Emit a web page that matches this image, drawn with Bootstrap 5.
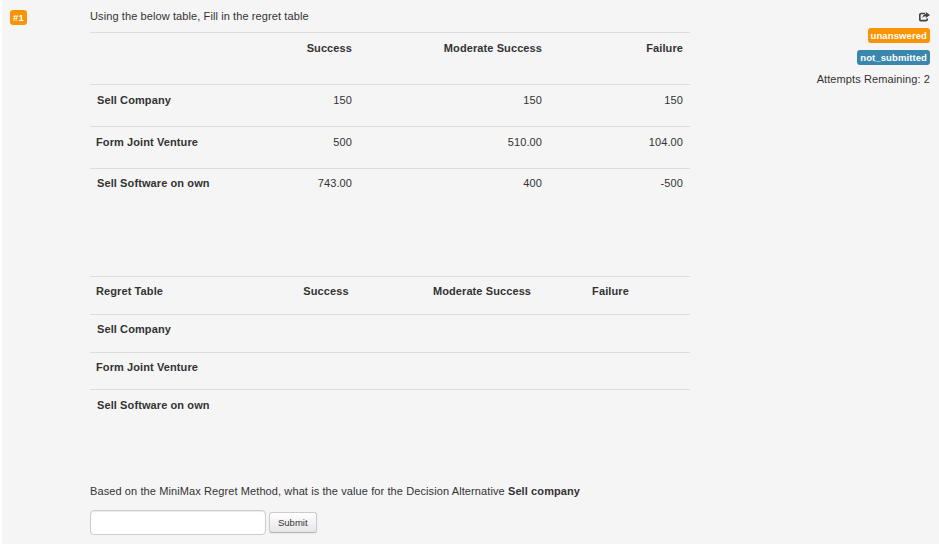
<!DOCTYPE html>
<html lang="en">
<head>
<meta charset="utf-8">
<title>Question</title>
<link href="https://cdn.jsdelivr.net/npm/bootstrap@5.3.0/dist/css/bootstrap.min.css" rel="stylesheet">
<style>
html,body{height:100%;overflow:hidden}
body{background:#fff;font-family:"Liberation Sans",Arial,sans-serif;font-size:11px;color:#333;line-height:16px;letter-spacing:.1px}
.shell{margin-left:2px;background:#f5f5f5;height:544px;padding-top:8px}
.side-l{width:88px;flex:none;padding-left:8px}
.main-c{width:600px;flex:none}
.side-r{flex:1;padding-right:9px;text-align:right}
.tag{display:inline-block;font-weight:700;font-size:9.5px;line-height:13px;color:#fff;border-radius:3px;padding:1px 3px;letter-spacing:.1px}
.tag-o{background:#f89406}
.tag-b{background:#3a87ad}
.tag-num{margin-top:2px}
.intro{margin:0 0 8px;height:16px}
.sheet{--bs-table-bg:transparent;margin:0;table-layout:fixed;width:600px;color:#333}
.sheet th,.sheet td{border-top:1px solid #ddd;border-bottom:0;padding:7px;font-size:11px;line-height:16px;box-shadow:none;color:#333}
.t1 th,.t1 td{text-align:right}
.t1 th:first-child,.t2 th:first-child{text-align:left}
.t1 thead th{height:52px;vertical-align:top}
.t1 tbody th,.t1 tbody td{height:42px;padding-top:7px;padding-bottom:7px;vertical-align:top}
.t1 tbody tr:last-child th,.t1 tbody tr:last-child td{padding-top:6px}
.t2 th,.t2 td{height:38px;padding-top:6px;padding-bottom:6px;vertical-align:top;text-align:center}
.t2 tr.last-r th,.t2 tr.last-r td{height:37px}
.t2 tr:last-child th,.t2 tr:last-child td{padding-top:7px}
.sp1{height:65px}
.gap2{height:56px}
.ask{margin:0 0 11px}
.answer{width:176px;height:25px;border:1px solid #ccc;border-radius:4px;background:#fff;box-shadow:inset 0 1px 1px rgba(0,0,0,.075);padding:2px 6px;font-size:11px}
.go{font-size:9.5px;line-height:14px;height:21px;padding:2px 8px;color:#333;border:1px solid #ccc;border-bottom-color:#b3b3b3;border-radius:3px;background:linear-gradient(#fff,#e6e6e6);box-shadow:inset 0 1px 0 rgba(255,255,255,.2),0 1px 2px rgba(0,0,0,.05)}
.pad-h{padding-left:6px!important}
.ico{display:block;margin:4px 0 5px auto}
.rw{margin-bottom:5px;height:17px}
.submit-row{gap:3px}
</style>
</head>
<body>
<div class="shell d-flex">
  <div class="side-l"><span class="tag tag-o tag-num">#1</span></div>
  <div class="main-c">
    <p class="intro">Using the below table, Fill in the regret table</p>
    <table class="table sheet t1">
      <colgroup><col style="width:170px"><col style="width:99px"><col style="width:190px"><col style="width:141px"></colgroup>
      <thead><tr><th></th><th>Success</th><th>Moderate Success</th><th>Failure</th></tr></thead>
      <tbody>
        <tr><th>Sell Company</th><td>150</td><td>150</td><td>150</td></tr>
        <tr><th class="pad-h">Form Joint Venture</th><td>500</td><td>510.00</td><td>104.00</td></tr>
        <tr><th>Sell Software on own</th><td>743.00</td><td>400</td><td>-500</td></tr>
      </tbody>
    </table>
    <div class="sp1"></div>
    <table class="table sheet t2">
      <colgroup><col style="width:178px"><col style="width:116px"><col style="width:196px"><col style="width:61px"><col style="width:49px"></colgroup>
      <tbody>
        <tr><th class="pad-h">Regret Table</th><th>Success</th><th>Moderate Success</th><th>Failure</th><th></th></tr>
        <tr><th>Sell Company</th><td></td><td></td><td></td><td></td></tr>
        <tr class="last-r"><th class="pad-h">Form Joint Venture</th><td></td><td></td><td></td><td></td></tr>
        <tr><th>Sell Software on own</th><td></td><td></td><td></td><td></td></tr>
      </tbody>
    </table>
    <div class="gap2"></div>
    <p class="ask">Based on the MiniMax Regret Method, what is the value for the Decision Alternative <b>Sell company</b></p>
    <form class="d-flex align-items-center submit-row">
      <input class="answer" type="text" aria-label="Answer">
      <button class="go" type="button">Submit</button>
    </form>
  </div>
  <div class="side-r">
    <svg class="ico" width="11" height="10" viewBox="0 0 11 10" aria-hidden="true"><path d="M6 1.500H2.200A1.400 1.400 0 0 0 .8 2.900v4.400a1.400 1.400 0 0 0 1.400 1.400h4.600a1.400 1.400 0 0 0 1.400-1.400V6.500" fill="none" stroke="#444" stroke-width="1.700"/><path d="M6.800 0 11 3 6.800 6V4.300C5 4.200 4 5 3.400 6.300c0-2.600 1.300-4 3.400-4.300z" fill="#444"/></svg>
    <div class="rw"><span class="tag tag-o">unanswered</span></div>
    <div class="rw"><span class="tag tag-b">not_submitted</span></div>
    <div>Attempts Remaining: 2</div>
  </div>
</div>
<script src="https://cdn.jsdelivr.net/npm/bootstrap@5.3.0/dist/js/bootstrap.bundle.min.js"></script>
</body>
</html>
